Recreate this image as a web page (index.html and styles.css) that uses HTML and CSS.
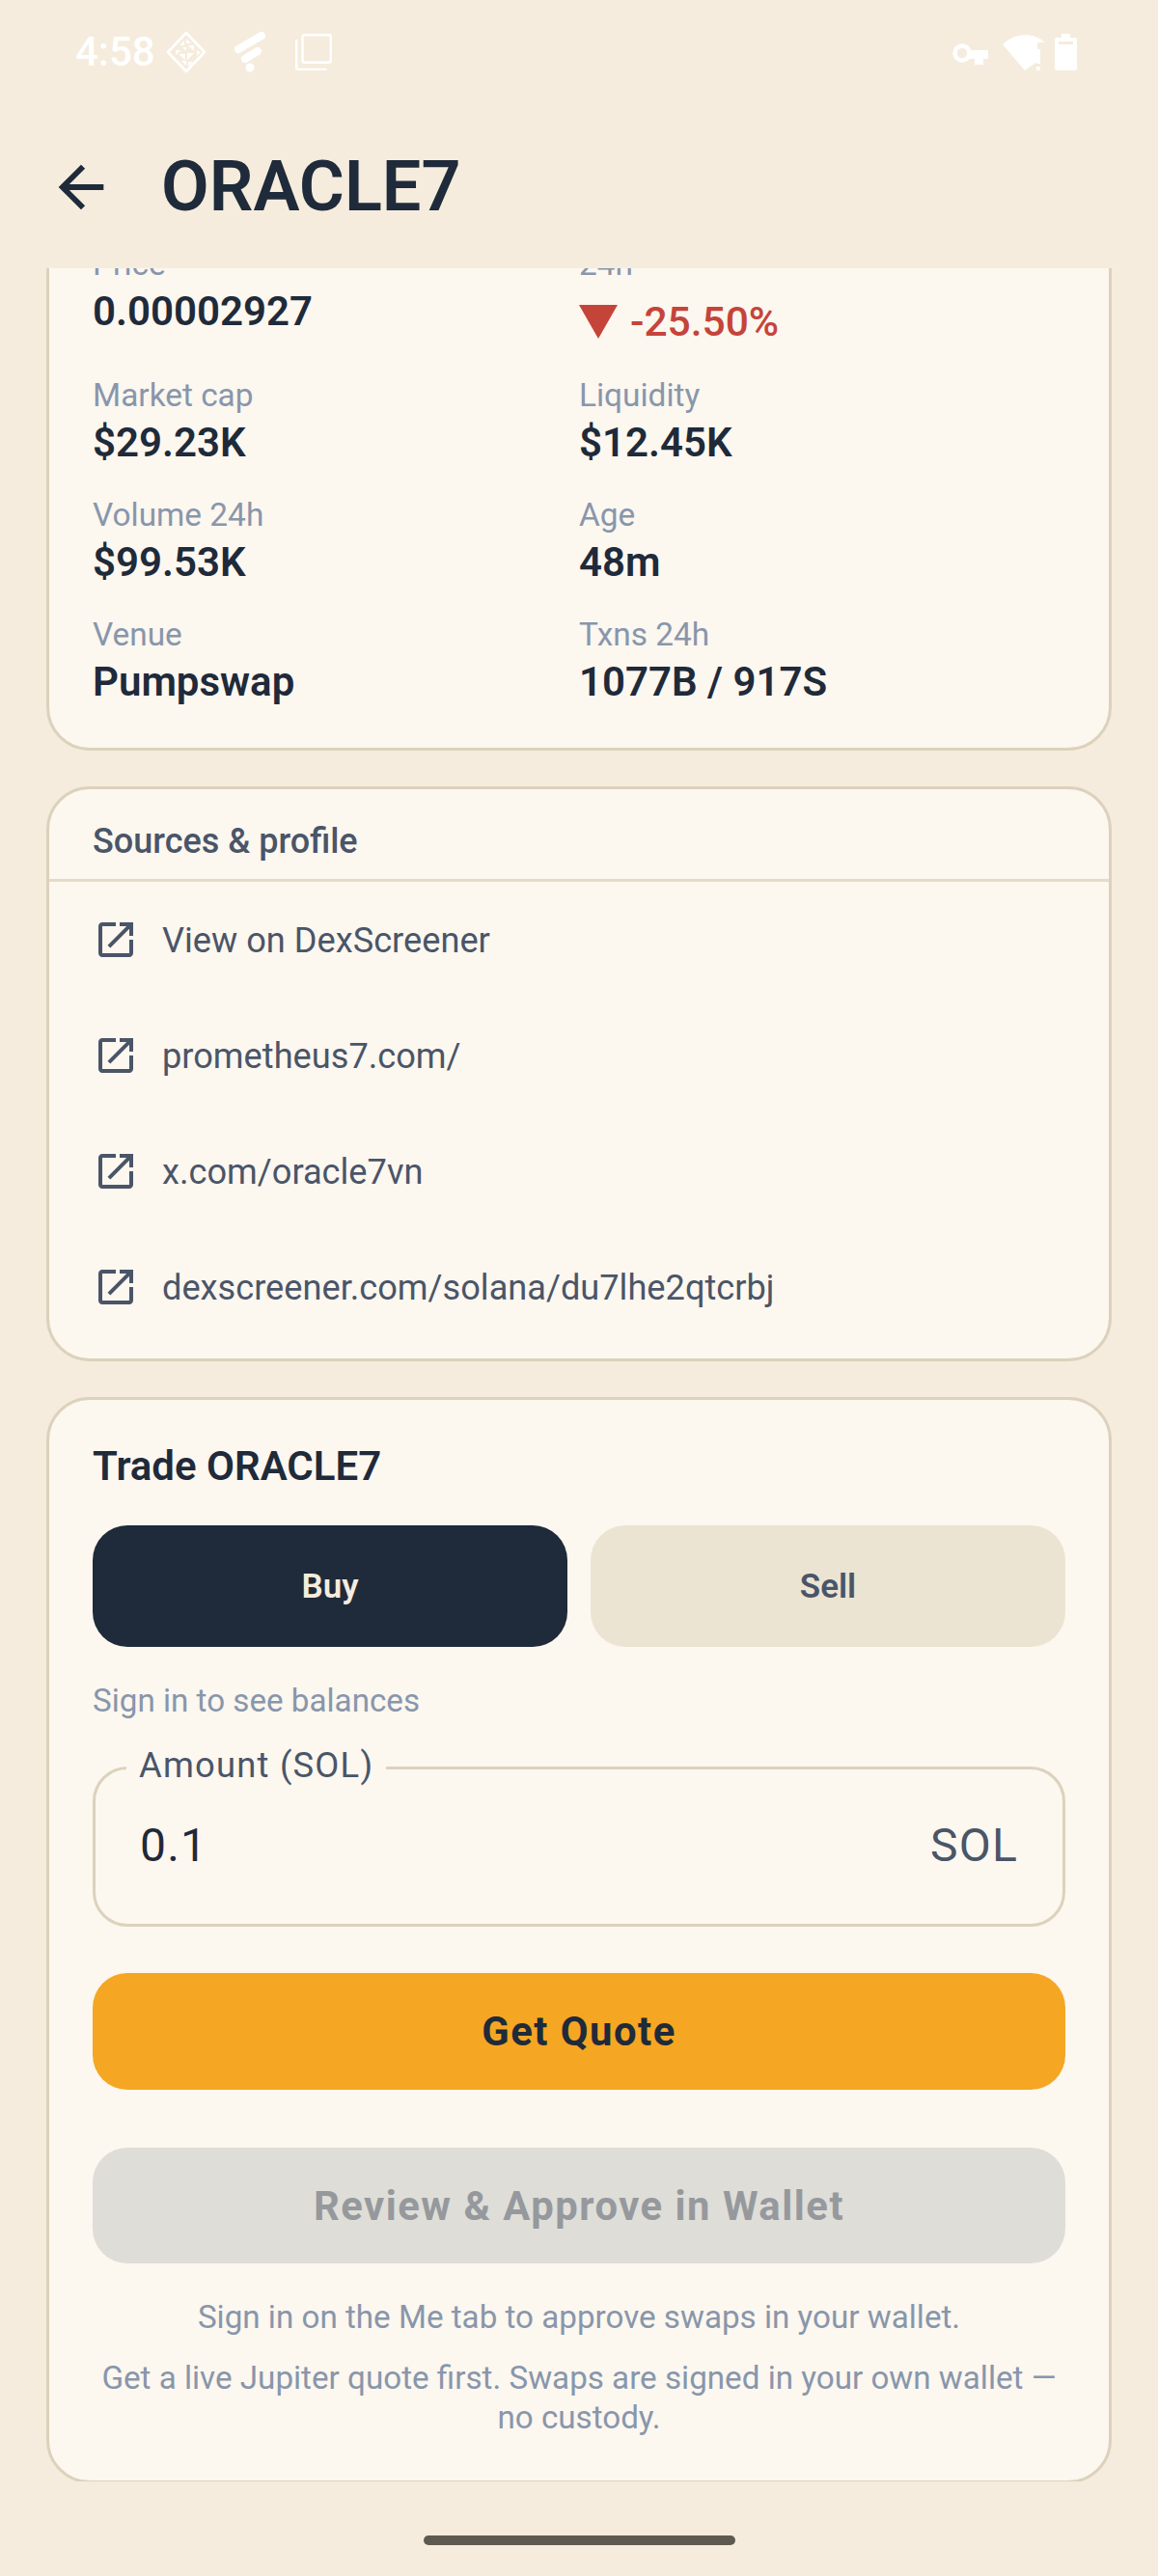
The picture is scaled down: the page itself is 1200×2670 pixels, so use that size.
FILE: index.html
```html
<!DOCTYPE html>
<html lang="en">
  <head>
    <meta charset="UTF-8" />
    <meta name="viewport" content="width=device-width, initial-scale=1.0" />
    <title>ORACLE7</title>
    <link rel="stylesheet" href="styles.css">
  </head>
  <body>
    <div class="screen">
      <div class="status-bar">
        <div class="status-left">
          <span class="clock">4:58</span>
          <svg class="icon-diamond" width="42" height="44" viewBox="0 0 42 44">
            <path d="M21 2 40 22 21 42 2 22Z" fill="none" stroke="#fff" stroke-width="2.6" stroke-linejoin="round"/>
            <path d="M21 8 26 13H21ZM19 10V15H14ZM10 20H15L10 25ZM17 17H21V21ZM23 15H29V21ZM32 20 36 22 32 26ZM13 24H20V30ZM22 23H29L22 30ZM16 31H21V36ZM23 32H28L23 37Z" fill="#fff"/>
          </svg>
          <svg class="icon-flash" width="32" height="42" viewBox="0 0 32 42">
            <path d="M4 18 28 4" stroke="#fff" stroke-width="8" stroke-linecap="round"/>
            <path d="M11 28 24 20" stroke="#fff" stroke-width="8" stroke-linecap="round"/>
            <circle cx="16" cy="37" r="4.5" fill="#fff"/>
          </svg>
          <svg class="icon-copy" width="38" height="38" viewBox="0 0 38 38">
            <rect x="7.5" y="1.2" width="29.3" height="28.5" rx="2" fill="none" stroke="#fff" stroke-width="2.4"/>
            <path d="M1.2 6V35a2 2 0 0 0 2 2H32.7" fill="none" stroke="#fff" stroke-width="2.4"/>
          </svg>
        </div>
        <div class="status-right">
          <svg class="icon-key" width="37" height="22" viewBox="0 0 37 22">
            <circle cx="10" cy="10" r="7.5" fill="none" stroke="#fff" stroke-width="4.5"/>
            <path d="M17 7H37V16H32V22H23V16H17Z" fill="#fff"/>
          </svg>
          <svg width="44" height="38" viewBox="0 0 44 38">
            <path d="M0 11C11 0 30-3 44 9L36 9V29L23 38Z" fill="#fff"/>
            <path d="M35 16h4v15h-4zM35 34h4v4h-4z" fill="#fff"/>
          </svg>
          <svg class="icon-battery" width="23" height="38" viewBox="0 0 23 38">
            <path d="M7 0H16V4H21A2 2 0 0 1 23 6V36A2 2 0 0 1 21 38H2A2 2 0 0 1 0 36V6A2 2 0 0 1 2 4H7Z" fill="#fff"/>
            <rect x="4" y="8" width="15" height="3" fill="#f5ecdd"/>
          </svg>
        </div>
      </div>

      <div class="app-bar">
        <svg class="back" width="70" height="70" viewBox="0 0 24 24">
          <path d="M20 11H7.83l5.59-5.59L12 4l-8 8 8 8 1.41-1.41L7.83 13H20v-2z" fill="#1f2a3a"/>
        </svg>
        <h1>ORACLE7</h1>
      </div>

      <div class="scroll">
        <div class="scroll-inner">
          <div class="card stats">
            <div class="stat">
              <div class="stat-label">Price</div>
              <div class="stat-value">0.00002927</div>
            </div>
            <div class="stat">
              <div class="stat-label">24h</div>
              <div class="stat-change">
                <span class="arrow"></span>
                <span>-25.50%</span>
              </div>
            </div>
            <div class="stat">
              <div class="stat-label">Market cap</div>
              <div class="stat-value">$29.23K</div>
            </div>
            <div class="stat">
              <div class="stat-label">Liquidity</div>
              <div class="stat-value">$12.45K</div>
            </div>
            <div class="stat">
              <div class="stat-label">Volume 24h</div>
              <div class="stat-value">$99.53K</div>
            </div>
            <div class="stat">
              <div class="stat-label">Age</div>
              <div class="stat-value">48m</div>
            </div>
            <div class="stat">
              <div class="stat-label">Venue</div>
              <div class="stat-value">Pumpswap</div>
            </div>
            <div class="stat">
              <div class="stat-label">Txns 24h</div>
              <div class="stat-value">1077B / 917S</div>
            </div>
          </div>

          <div class="card sources">
            <div class="sources-title">Sources &amp; profile</div>
            <div class="source">
              <svg width="48" height="48" viewBox="0 0 24 24"><path d="M19 19H5V5h7V3H5c-1.11 0-2 .9-2 2v14c0 1.1.89 2 2 2h14c1.1 0 2-.9 2-2v-7h-2v7zM14 3v2h3.59l-9.83 9.83 1.41 1.41L19 6.41V10h2V3h-7z"/></svg>
              <span>View on DexScreener</span>
            </div>
            <div class="source">
              <svg width="48" height="48" viewBox="0 0 24 24"><path d="M19 19H5V5h7V3H5c-1.11 0-2 .9-2 2v14c0 1.1.89 2 2 2h14c1.1 0 2-.9 2-2v-7h-2v7zM14 3v2h3.59l-9.83 9.83 1.41 1.41L19 6.41V10h2V3h-7z"/></svg>
              <span>prometheus7.com/</span>
            </div>
            <div class="source">
              <svg width="48" height="48" viewBox="0 0 24 24"><path d="M19 19H5V5h7V3H5c-1.11 0-2 .9-2 2v14c0 1.1.89 2 2 2h14c1.1 0 2-.9 2-2v-7h-2v7zM14 3v2h3.59l-9.83 9.83 1.41 1.41L19 6.41V10h2V3h-7z"/></svg>
              <span>x.com/oracle7vn</span>
            </div>
            <div class="source">
              <svg width="48" height="48" viewBox="0 0 24 24"><path d="M19 19H5V5h7V3H5c-1.11 0-2 .9-2 2v14c0 1.1.89 2 2 2h14c1.1 0 2-.9 2-2v-7h-2v7zM14 3v2h3.59l-9.83 9.83 1.41 1.41L19 6.41V10h2V3h-7z"/></svg>
              <span>dexscreener.com/solana/du7lhe2qtcrbj</span>
            </div>
          </div>

          <div class="card trade">
            <div class="trade-title">Trade ORACLE7</div>
            <div class="tabs">
              <div class="tab tab-active">Buy</div>
              <div class="tab">Sell</div>
            </div>
            <div class="balance-hint">Sign in to see balances</div>
            <div class="field">
              <span class="field-label">Amount (SOL)</span>
              <span class="field-value">0.1</span>
              <span class="field-suffix">SOL</span>
            </div>
            <div class="btn btn-quote">Get Quote</div>
            <div class="btn btn-review">Review &amp; Approve in Wallet</div>
            <p class="note note-first">Sign in on the Me tab to approve swaps in your wallet.</p>
            <p class="note">Get a live Jupiter quote first. Swaps are signed in your own wallet — no custody.</p>
          </div>
        </div>
      </div>

      <div class="nav-bar"><div class="home-pill"></div></div>
    </div>
  </body>
</html>
```

FILE: styles.css
```css
* {
  box-sizing: border-box;
}
body {
  margin: 0;
  font-family: Roboto, "Liberation Sans", sans-serif;
  background-color: #f5ecdd;
  color: #1f2a3a;
}
.screen {
  width: 1200px;
  height: 2670px;
  display: flex;
  flex-direction: column;
  overflow: hidden;
}

/* status bar */
.status-bar {
  height: 110px;
  padding: 32px 84px 0 78px;
  display: flex;
  justify-content: space-between;
  align-items: flex-start;
  flex-shrink: 0;
}
.status-left {
  display: flex;
  align-items: center;
  height: 44px;
}
.clock {
  color: #fff;
  font-size: 42px;
  font-weight: 500;
  line-height: 44px;
}
.status-left svg,
.status-right svg {
  display: block;
}
.icon-diamond {
  margin-left: 11px;
}
.icon-flash {
  margin-left: 29px;
}
.icon-copy {
  margin-left: 31px;
}
.status-right {
  display: flex;
  align-items: center;
  gap: 15px;
  height: 44px;
}
.icon-key {
  margin-top: 4px;
}
.icon-battery {
  margin-left: -5px;
}

/* app bar */
.app-bar {
  height: 168px;
  padding-left: 49px;
  display: flex;
  align-items: center;
  flex-shrink: 0;
}
.back {
  flex-shrink: 0;
}
.app-bar h1 {
  margin: 0 0 0 48px;
  font-size: 72px;
  font-weight: 600;
  line-height: 84px;
  color: #1f2a3a;
}

/* scrolling content */
.scroll {
  flex: 1;
  overflow: hidden;
}
.scroll-inner {
  margin-top: -68px;
  padding: 0 48px;
  display: flex;
  flex-direction: column;
  gap: 37px;
}
.card {
  background: #fcf7ef;
  border: 3px solid #dcd2bc;
  border-radius: 45px;
}

/* stats */
.stats {
  padding: 37px 45px 0;
  height: 568px;
  display: grid;
  grid-template-columns: 504px 504px;
  grid-template-rows: 136px repeat(3, 124px);
}
.stat-label {
  font-size: 33.4px;
  line-height: 48px;
  color: #8896ab;
}
.stat-value {
  font-size: 42px;
  font-weight: 600;
  line-height: 50px;
  color: #1f2a3a;
}
.stat-change {
  display: flex;
  align-items: center;
  gap: 13px;
  height: 70px;
  font-size: 42.5px;
  font-weight: 500;
  color: #c5443a;
}
.arrow {
  width: 0;
  height: 0;
  border-left: 20px solid transparent;
  border-right: 20px solid transparent;
  border-top: 35px solid #c5443a;
}

/* sources */
.sources {
  height: 596px;
}
.sources-title {
  height: 96px;
  padding: 14px 45px 0;
  display: flex;
  align-items: center;
  font-size: 36px;
  font-weight: 500;
  color: #4a5568;
  border-bottom: 3px solid #e5dcc8;
}
.source {
  height: 120px;
  padding-left: 45px;
  display: flex;
  align-items: center;
  gap: 24px;
  font-size: 36.2px;
  color: #4a5568;
}
.source svg {
  fill: #4a5568;
  flex-shrink: 0;
}

/* trade */
.trade {
  height: 1126px;
  padding: 44px 45px 0;
}
.trade-title {
  font-size: 42px;
  font-weight: 600;
  line-height: 50px;
  color: #1f2a3a;
}
.tabs {
  display: flex;
  gap: 24px;
  margin-top: 36px;
}
.tab {
  flex: 1;
  height: 126px;
  display: flex;
  align-items: center;
  justify-content: center;
  border-radius: 36px;
  background: #ece4d2;
  font-size: 35px;
  font-weight: 600;
  color: #4a5568;
}
.tab-active {
  background: #1f2a3a;
  color: #f5ecdd;
}
.balance-hint {
  margin-top: 36px;
  font-size: 33.2px;
  line-height: 40px;
  color: #8896ab;
}
.field {
  position: relative;
  margin-top: 48px;
  height: 166px;
  padding: 0 46px 4px;
  display: flex;
  align-items: center;
  justify-content: space-between;
  border: 3px solid #dcd2bc;
  border-radius: 36px;
  letter-spacing: 1.2px;
}
.field-label {
  position: absolute;
  left: 32px;
  top: -25px;
  padding: 0 13px;
  background: #fcf7ef;
  font-size: 36.4px;
  line-height: 42px;
  color: #4a5568;
}
.field-value {
  font-size: 48px;
  color: #1f2a3a;
}
.field-suffix {
  font-size: 48px;
  color: #4a5568;
}
.btn {
  display: flex;
  align-items: center;
  justify-content: center;
  border-radius: 36px;
  font-size: 41.8px;
  font-weight: 700;
  letter-spacing: 1.5px;
}
.btn-quote {
  height: 121px;
  margin-top: 48px;
  background: #f5a623;
  color: #1f2a3a;
}
.btn-review {
  height: 120px;
  margin-top: 60px;
  background: #dfddd7;
  color: #95999d;
}
.note {
  margin: 0;
  text-align: center;
  font-size: 33.2px;
  line-height: 41px;
  color: #8896ab;
}
.note-first {
  margin-top: 35px;
  margin-bottom: 22px;
}

/* nav */
.nav-bar {
  height: 98px;
  display: flex;
  justify-content: center;
  flex-shrink: 0;
}
.home-pill {
  width: 323px;
  height: 10px;
  margin-top: 56px;
  border-radius: 5px;
  background: #5f5a50;
}
```
